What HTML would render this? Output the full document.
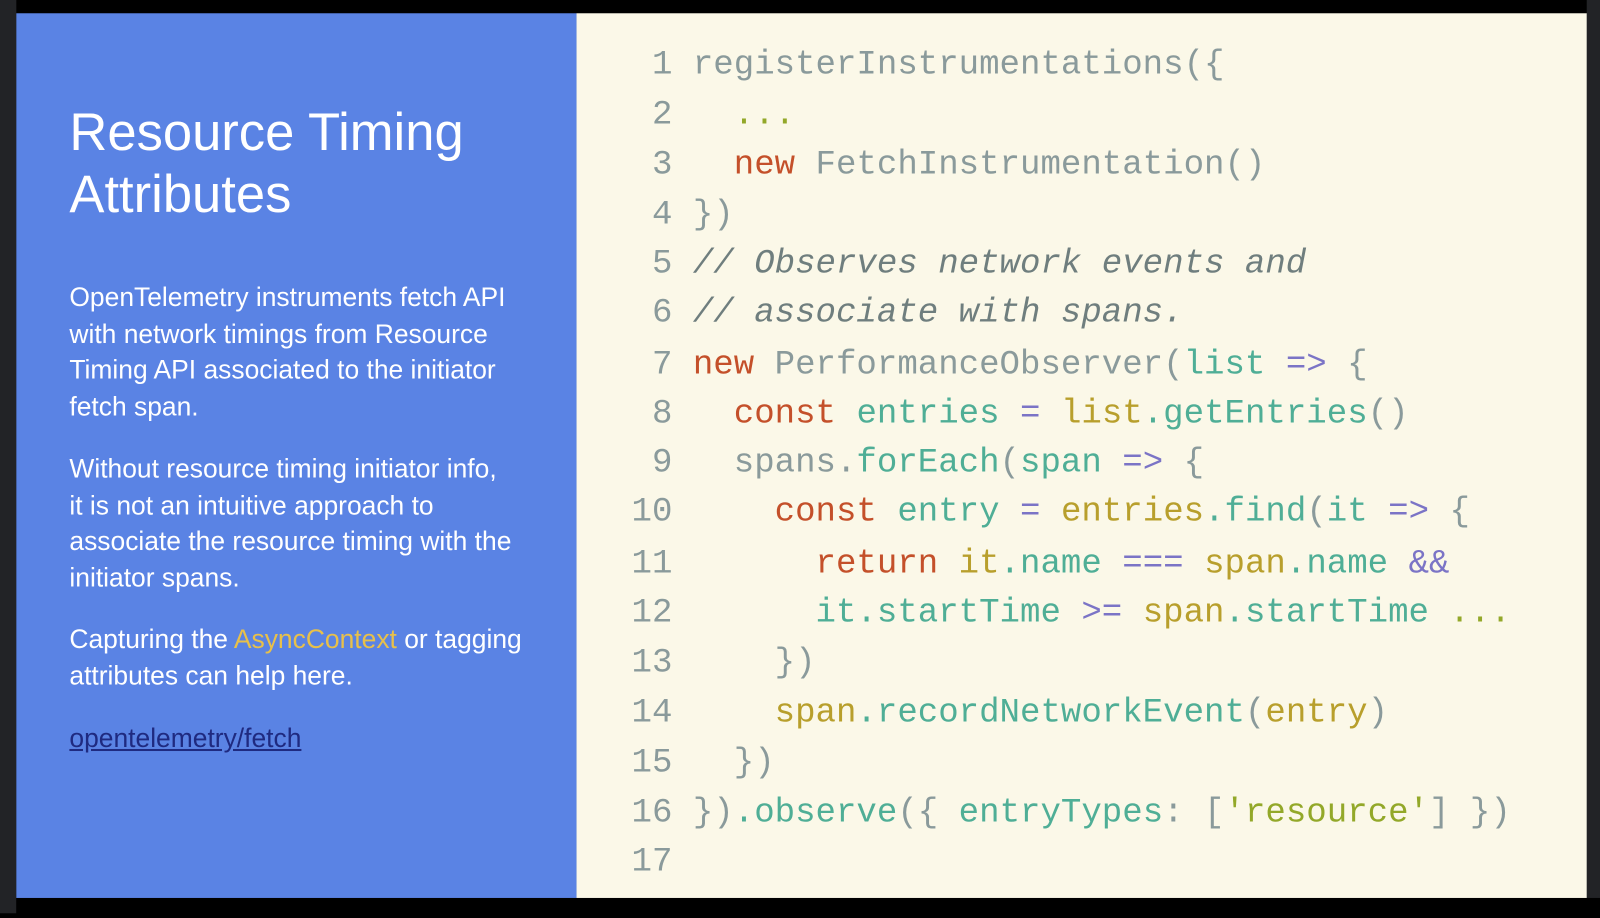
<!DOCTYPE html>
<html><head><meta charset="utf-8"><style>
html,body{margin:0;padding:0}
body{width:1600px;height:913px;background:#000;overflow:hidden;font-family:"Liberation Sans",sans-serif}
#w{position:absolute;left:0;top:0;width:1568px;height:895px;transform:scale(1.0204);transform-origin:0 0;background:#000}
#lb{position:absolute;left:0;top:0;width:16px;height:895px;background:#222326}
#rb{position:absolute;left:1555px;top:0;width:20px;height:895px;background:#222326}
#top{position:absolute;left:0;top:0;width:1568px;height:13px;background:#000}
#bot{position:absolute;left:16px;top:880px;width:1560px;height:20px;background:#000}
#blue{position:absolute;left:16px;top:13px;width:549px;height:867px;background:#5a83e4}
#code{position:absolute;left:565px;top:13px;width:990px;height:867px;background:#fbf8e8}
.t{position:absolute;left:52px;color:#fff;white-space:nowrap}
h1{margin:0;font-weight:normal;font-size:51.5px;line-height:61px}
.p{font-size:25.9px;line-height:35.5px}
.l{position:absolute;left:0;font-family:"Liberation Mono",monospace;font-size:33.4px;line-height:33px;white-space:pre;color:#8a9a9b}
.n{display:inline-block;width:94px;text-align:right;margin-right:20px;color:#8a9a9b}
.k{color:#c4502a}.g{color:#4fae96}.y{color:#b89f2c}.o{color:#7b74c6}.s{color:#93a829}.c{color:#6f7e7e;font-style:italic}
</style></head><body><div id="w">
<div id="top"></div><div id="lb"></div><div id="rb"></div><div id="bot"></div>
<div id="blue">
<div class="t" style="top:86px"><h1>Resource Timing<br>Attributes</h1></div>
<div class="t p" style="top:262px">OpenTelemetry instruments fetch API<br>with network timings from Resource<br>Timing API associated to the initiator<br>fetch span.</div>
<div class="t p" style="top:430px">Without resource timing initiator info,<br>it is not an intuitive approach to<br>associate the resource timing with the<br>initiator spans.</div>
<div class="t p" style="top:597px">Capturing the <span style="color:#e8c04a">AsyncContext</span> or tagging<br>attributes can help here.</div>
<div class="t p" style="top:694px;color:#1f2a80;text-decoration:underline">opentelemetry/fetch</div>
</div>
<div id="code">
<div class="l" style="top:35px"><span class="n">1</span>registerInstrumentations({</div>
<div class="l" style="top:84px"><span class="n">2</span>  <span class="s">...</span></div>
<div class="l" style="top:133px"><span class="n">3</span>  <span class="k">new</span> FetchInstrumentation()</div>
<div class="l" style="top:182px"><span class="n">4</span>})</div>
<div class="l" style="top:230px"><span class="n">5</span><span class="c">// Observes network events and</span></div>
<div class="l" style="top:278px"><span class="n">6</span><span class="c">// associate with spans.</span></div>
<div class="l" style="top:329px"><span class="n">7</span><span class="k">new</span> PerformanceObserver(<span class="g">list</span> <span class="o">=&gt;</span> {</div>
<div class="l" style="top:377px"><span class="n">8</span>  <span class="k">const</span> <span class="g">entries</span> <span class="o">=</span> <span class="y">list</span><span class="g">.getEntries</span>()</div>
<div class="l" style="top:425px"><span class="n">9</span>  spans.<span class="g">forEach</span>(<span class="g">span</span> <span class="o">=&gt;</span> {</div>
<div class="l" style="top:473px"><span class="n">10</span>    <span class="k">const</span> <span class="g">entry</span> <span class="o">=</span> <span class="y">entries</span><span class="g">.find</span>(<span class="g">it</span> <span class="o">=&gt;</span> {</div>
<div class="l" style="top:524px"><span class="n">11</span>      <span class="k">return</span> <span class="y">it</span><span class="g">.name</span> <span class="o">===</span> <span class="y">span</span><span class="g">.name</span> <span class="o">&amp;&amp;</span></div>
<div class="l" style="top:572px"><span class="n">12</span>      <span class="g">it.startTime</span> <span class="o">&gt;=</span> <span class="y">span</span><span class="g">.startTime</span> <span class="s">...</span></div>
<div class="l" style="top:621px"><span class="n">13</span>    })</div>
<div class="l" style="top:670px"><span class="n">14</span>    <span class="y">span</span><span class="g">.recordNetworkEvent</span>(<span class="y">entry</span>)</div>
<div class="l" style="top:719px"><span class="n">15</span>  })</div>
<div class="l" style="top:768px"><span class="n">16</span>})<span class="g">.observe</span>({ <span class="g">entryTypes</span>: [<span class="s">'resource'</span>] })</div>
<div class="l" style="top:816px"><span class="n">17</span></div>
</div>
</div></body></html>
